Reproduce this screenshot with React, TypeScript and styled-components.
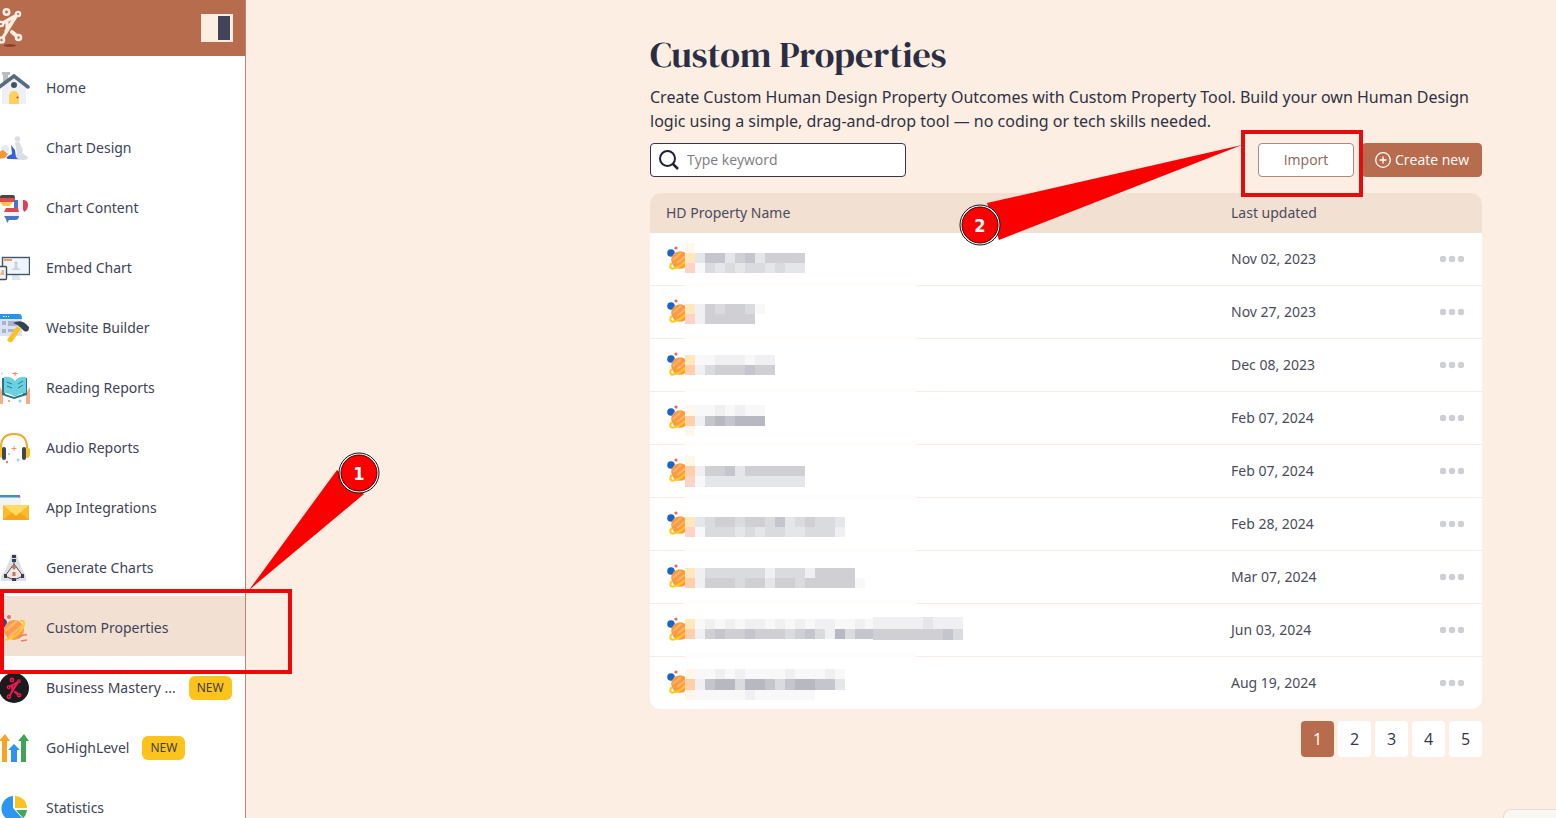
import React from 'react';
import styled, { createGlobalStyle } from 'styled-components';

const Global = createGlobalStyle`
  *, *::before, *::after { box-sizing: border-box; }
  body {
    margin: 0;
    background: #fceee3;
    color: #3f4254;
    font-family: "Noto Sans", "Open Sans", sans-serif;
    font-size: 14px;
    line-height: 20px;
  }
  button, input { font: inherit; font-family: "Open Sans", "Noto Sans", sans-serif; }
`;

const Shell = styled.div`
  display: flex;
  height: 100vh;
  overflow: hidden;
`;

const Sidebar = styled.aside`
  flex: 0 0 246px;
  height: 100vh;
  background: #fff;
  border-right: 1px solid #b98674;
`;

const Brand = styled.header`
  display: flex;
  align-items: center;
  justify-content: space-between;
  height: 56px;
  padding-right: 12px;
  background: #b86c4e;
`;

const CollapseButton = styled.button`
  display: flex;
  justify-content: flex-end;
  width: 32px;
  height: 28px;
  padding: 2px 3px;
  border: 0;
  background: #fdeee2;
  &::after {
    content: '';
    width: 12px;
    height: 24px;
    background: #404359;
  }
`;

const NavList = styled.ul`
  margin: 0;
  padding: 0;
  list-style: none;
`;

const NavItem = styled.li<{ $active?: boolean }>`
  position: relative;
  z-index: ${(p) => (p.$active ? 2 : 0)};
  background: ${(p) => (p.$active ? '#f2e0d3' : 'transparent')};
`;

const NavLink = styled.a`
  display: flex;
  align-items: center;
  height: 60px;
  padding: 4px 12px 0 0;
  color: #404359;
  text-decoration: none;
  white-space: nowrap;
`;

const NavIcon = styled.svg`
  flex: none;
  width: 30px;
  height: 32px;
  margin-right: 16px;
`;

const Badge = styled.span`
  margin-left: 13px;
  padding: 0 8px;
  border-radius: 6px;
  background: #fbc31c;
  color: #404040;
  font-size: 12px;
  line-height: 24px;
`;

const Callout = styled.svg<{ $left: number; $top: number }>`
  position: absolute;
  left: ${(p) => p.$left}px;
  top: ${(p) => p.$top}px;
  pointer-events: none;
  z-index: 3;
  text {
    fill: #fff;
    font: bold 18px "DejaVu Sans Condensed", "DejaVu Sans", sans-serif;
    text-anchor: middle;
  }
`;

const Main = styled.main`
  flex: 1;
  display: flex;
  justify-content: flex-end;
  padding: 31px 74px 0 24px;
`;

const Content = styled.div`
  width: 100%;
  max-width: 832px;
`;

const Title = styled.h1`
  margin: 0 0 6px;
  color: #2b2e42;
  font-family: "DM Serif Display", "Liberation Serif", serif;
  font-size: 36px;
  font-weight: 400;
  line-height: 48px;
`;

const Lead = styled.p`
  margin: 0 0 10px;
  color: #2f3142;
  font-size: 16px;
  line-height: 24px;
`;

const Toolbar = styled.div`
  display: flex;
  align-items: center;
  gap: 8px;
  margin-bottom: 16px;
`;

const SearchBox = styled.label`
  display: flex;
  align-items: center;
  width: 256px;
  height: 34px;
  margin-right: auto;
  padding: 0 8px;
  gap: 8px;
  border: 1px solid #33354a;
  border-radius: 4px;
  background: #fff;
  svg { flex: none; }
`;

const SearchInput = styled.input`
  flex: 1;
  min-width: 0;
  padding: 0;
  border: 0;
  outline: 0;
  background: transparent;
  color: #33354a;
  &::placeholder { color: #7b7c80; opacity: 1; }
`;

const ImportSlot = styled.div`
  position: relative;
  z-index: 2;
`;

const Button = styled.button<{ $primary?: boolean }>`
  display: flex;
  align-items: center;
  justify-content: center;
  gap: 4px;
  width: ${(p) => (p.$primary ? 120 : 96)}px;
  height: 34px;
  padding: 0;
  border: 1px solid ${(p) => (p.$primary ? '#b86c4e' : '#b08a7c')};
  border-radius: 4px;
  background: ${(p) => (p.$primary ? '#b86c4e' : '#fff')};
  color: ${(p) => (p.$primary ? '#fff' : '#8e6455')};
`;

const TableCard = styled.div`
  overflow: hidden;
  border-radius: 10px;
  background: #fff;
`;

const Table = styled.table`
  width: 100%;
  border-collapse: separate;
  border-spacing: 0;
  table-layout: fixed;
`;

const HeadCell = styled.th<{ $width?: number }>`
  width: ${(p) => (p.$width ? `${p.$width}px` : 'auto')};
  height: 40px;
  padding: 0 16px;
  background: #f2e0d3;
  color: #4a4c5c;
  font-weight: 400;
  text-align: left;
`;

const Cell = styled.td`
  height: 53px;
  padding: 0 16px;
  border-bottom: 1px solid #f5ece7;
  color: #4a4c5c;
  tr:last-child > & {
    height: 52px;
    border-bottom: 0;
  }
`;

const NameArt = styled.svg`
  display: block;
  overflow: visible;
`;

const MoreButton = styled.button`
  display: block;
  padding: 0;
  margin-left: auto;
  border: 0;
  background: none;
  line-height: 0;
`;

const Pager = styled.nav`
  display: flex;
  justify-content: flex-end;
  gap: 4px;
  margin-top: 12px;
`;

const PageButton = styled.button<{ $current?: boolean }>`
  width: 33px;
  height: 36px;
  padding: 0;
  border: 0;
  border-radius: 4px;
  background: ${(p) => (p.$current ? '#b86c4e' : '#fff')};
  color: ${(p) => (p.$current ? '#fff' : '#33354a')};
  font-size: 16px;
`;

const CornerWidget = styled.div`
  position: fixed;
  right: 0;
  bottom: 0;
  width: 53px;
  height: 9px;
  border: 1px solid #e6dcd4;
  border-width: 1px 0 0 1px;
  border-radius: 8px 0 0 0;
  background: #faf7f3;
`;

const Figure = ({ color, hole }: { color: string; hole: string }) => (
  <g stroke={color} fill={hole} strokeWidth="2.600" strokeLinecap="round" strokeLinejoin="round">
    <path d="M1 17 17 8 2 32M16 9 6 24M7 14v7" fill="none" strokeWidth="3.200" />
    <path d="M12 25l6 5" fill="none" strokeWidth="4" />
    <circle cx="6.500" cy="5" r="2.700" />
    <circle cx="18" cy="7" r="2.200" strokeWidth="2.200" />
    <circle cx="1" cy="17" r="2.200" strokeWidth="2.200" />
    <circle cx="1.500" cy="33" r="2.500" />
    <circle cx="18.500" cy="30.500" r="2.500" />
  </g>
);

const Planet = () => (
  <g>
    <circle cx="4" cy="10" r="3.800" fill="#1765c9" />
    <circle cx="9" cy="5" r="1.600" fill="#e2685e" />
    <circle cx="13" cy="17" r="8.800" fill="#fb9a3e" />
    <path d="M6 17 14 10M10 20 20 12" stroke="#ffb46a" strokeWidth="2" />
    <path d="M4.500 20q-3 6 2 5.500Q15 24 21 15" fill="none" stroke="#ffc91f" strokeWidth="2.200" />
  </g>
);

const icons: Record<string, React.ReactNode> = {
  home: (
    <>
      <path d="M2 0h8v3H8v7H3V3H2z" fill="#b7bec6" />
      <path d="M2 14 14 4l12 11v17H2z" fill="#eef0f5" />
      <path d="M-2 16 14 4l14 11" fill="none" stroke="#596b7e" strokeWidth="3.500" strokeLinecap="round" />
      <circle cx="14" cy="13" r="3" fill="#3e5266" />
      <path d="M9 32v-8a5 5 0 0 1 10 0v8z" fill="#ffd05b" />
      <circle cx="17.500" cy="25.500" r="1" fill="#7a6040" />
    </>
  ),
  design: (
    <>
      <circle cx="17.500" cy="7" r="2.800" fill="#dcdde1" />
      <path d="M15 11q3-2 5 0l3 7-1 3 6 4q0 3-4 3H14q-2-1 0-3l3-3z" fill="#dddee3" />
      <circle cx="5" cy="17" r="4" fill="#e5ecf6" />
      <path d="M11 13l4 5 1 7 2 2H8q-3-1 0-3l4-2z" fill="#3564d2" />
      <path d="M-1 20l4-2 5 4-3 4-6 1z" fill="#ef9b3d" />
    </>
  ),
  content: (
    <>
      <path d="M0 5q0-2 2-2h11q2 0 2 3H0z" fill="#4c4549" />
      <path d="M0 6h15v4H0z" fill="#e34c43" />
      <path d="M0 10h13l-3 4H3z" fill="#ffc453" />
      <path d="M14 8h4v8h-4z" fill="#4776c9" />
      <path d="M18 8h5v9h-5z" fill="#f1f1f4" />
      <path d="M23 8q5 0 5 5t-4 7l-1-3z" fill="#dc4058" />
      <path d="M6 16h12l1 4H4z" fill="#db4957" />
      <path d="M4 20h15v4H4z" fill="#f3f3f6" />
      <path d="M4 24h15q0 4-4 4H9l-2 3-1-4z" fill="#4777c6" />
    </>
  ),
  embed: (
    <>
      <path d="M12 23h7l2 5h-9z" fill="#dbe9f7" />
      <rect x="2.500" y="5.500" width="27" height="17" fill="#eff5fb" stroke="#40566e" strokeWidth="1.400" />
      <path d="M4 7h8v2H4z" fill="#f39869" />
      <circle cx="16" cy="11" r="1.500" fill="#c2ccd8" />
      <path d="M15 12h2l1 4 3 2H11l3-2z" fill="#cbd3dd" />
      <rect x="-3" y="14.500" width="9.500" height="13" rx="1" fill="#f4f4f4" stroke="#3d4c5e" strokeWidth="1.400" />
      <path d="M2 18h2v5H0z" fill="#e6b798" />
    </>
  ),
  website: (
    <>
      <path d="M0 7h22v17H0z" fill="#d9e2f5" />
      <path d="M0 2h19q3 0 3 5H0z" fill="#2394f0" />
      <path d="M3 4.500h6" stroke="#fff" strokeDasharray="1.500 1" />
      <path d="M2 9h4v4H2zM2 17h4v4H2zM8 9h9v5H8zM8 17h6v3H8z" fill="#a9b3cb" />
      <path d="M17 14l4 3-9 13q-3 1-5-2z" fill="#fbc21d" />
      <path d="M13 11q8-4 13 1l3 3q0 6-5 4l-4-4q-3-3-7-4z" fill="#344257" />
    </>
  ),
  reading: (
    <>
      <path d="M0 15q4 5 3 17H0zM30 15q-5 5-4 17h4z" fill="#f9ac88" />
      <path d="M2 6h3v16l9 3 9-3V6h4v17l-13 4L2 23z" fill="#2c7480" />
      <path d="M4 5q7-1 11 4v16Q10 21 4 21zM26 5q-7-1-11 4v16q5-4 11-4z" fill="#6bd0df" />
      <path d="M7 10l5 2M7 14l5 2M18 12l5-3M18 16l5-3" stroke="#277f91" />
      <path d="M15-1v5M12.500 1.500h5" stroke="#ef815d" />
      <circle cx="9" cy="29" r="1" fill="#ee8b70" />
      <circle cx="20" cy="29" r="1.500" fill="#8cd6ee" />
      <circle cx="2" cy="1.500" r="1" fill="#b7d8e4" />
    </>
  ),
  audio: (
    <>
      <path d="M1 20V14Q2 2 14 2t13 12v6" fill="none" stroke="#efa829" strokeWidth="2" />
      <path d="M-1 15q4-1 5 2v8l-5 1zM30 17q-5-4-7 1v7l5 1 2-2z" fill="#fcc21f" />
      <rect x="2" y="15" width="4" height="13" rx="2" fill="#404652" />
      <rect x="22" y="15" width="4" height="13" rx="2" fill="#404652" />
      <path d="M14 14v5M11.500 16.500h5" stroke="#ef985a" />
      <circle cx="9" cy="22" r="1" fill="#73caed" />
      <circle cx="18" cy="28" r="1.500" fill="#98d8f0" />
      <circle cx="7" cy="30" r="1.200" fill="#ee7966" />
    </>
  ),
  apps: (
    <>
      <path d="M0 4h21v14H0z" fill="#f3f3f6" />
      <path d="M0 3h20v2.500H0z" fill="#438fb7" />
      <circle cx="19" cy="4.200" r="1.300" fill="#a5756d" />
      <path d="M3 13h26v15H3z" fill="#fdbb2b" />
      <path d="M3 28 16 17l13 11z" fill="#f9a51b" />
      <path d="M3 13h26L16 24z" fill="#ffdb63" />
    </>
  ),
  generate: (
    <>
      <path d="M14 2q4 0 4 5l5 12 3 5v5H1v-5l4-5 5-12q0-5 4-5z" fill="#dedfe5" />
      <path d="M14 7v5l-9 12 9 4 9-4-9-12" fill="#f3e5e0" stroke="#4a5163" strokeWidth="1" />
      <path d="M12 3h4v3h-4zM12 7h4v3h-4zM4 22h3v4H4zM21 22h3v4h-3zM12 26h4v3h-4z" fill="#3a4051" />
      <path d="M14 12l2.500 3-2.500 3-2.500-3zM12.500 20h3v4h-3z" fill="#b77964" />
    </>
  ),
  properties: (
    <>
      <circle cx="2" cy="11" r="5" fill="#2f3f9b" />
      <circle cx="9" cy="5" r="2" fill="#ed6b62" />
      <circle cx="14" cy="18" r="10" fill="#fb9b48" />
      <path d="M5 19 17 9M9 25 23 13" stroke="#ffb56f" strokeWidth="2.500" />
      <path d="M20 9q5-1 4 4-5 12-19 15" fill="none" stroke="#ffca27" strokeWidth="2" />
      <path d="M18 26q5-4 9-3M21 29l6-1" fill="none" stroke="#f17b61" strokeWidth="1.500" />
    </>
  ),
  business: (
    <>
      <circle cx="14" cy="16" r="15" fill="#1b1b1d" />
      <g transform="translate(8 5) scale(.6)"><Figure color="#f0184f" hole="#1b1b1d" /></g>
    </>
  ),
  level: (
    <>
      <path d="M2 30V9h-3l6-7 5 7H7v21z" fill="#fba224" />
      <path d="M11 30V18H8l6-6 6 6h-3v12z" fill="#2c94ee" />
      <path d="M21 30V9h-3l6-7 5 7h-3v21z" fill="#42a452" />
    </>
  ),
  stats: (
    <>
      <path d="M13 4v12l9 10A12.500 12.500 0 1 1 13 4z" fill="#2c97f0" />
      <path d="M15 4a12 12 0 0 1 12 12H15z" fill="#fcc41d" />
      <path d="M16 18h11q-1 6-4 8z" fill="#42a757" />
    </>
  ),
};

const navItems = [
  { icon: 'home', label: 'Home' },
  { icon: 'design', label: 'Chart Design' },
  { icon: 'content', label: 'Chart Content' },
  { icon: 'embed', label: 'Embed Chart' },
  { icon: 'website', label: 'Website Builder' },
  { icon: 'reading', label: 'Reading Reports' },
  { icon: 'audio', label: 'Audio Reports' },
  { icon: 'apps', label: 'App Integrations' },
  { icon: 'generate', label: 'Generate Charts' },
  { icon: 'properties', label: 'Custom Properties', active: true },
  { icon: 'business', label: 'Business Mastery ...', isNew: true },
  { icon: 'level', label: 'GoHighLevel', isNew: true },
  { icon: 'stats', label: 'Statistics' },
];

/* Shades used by the pixelated property names. */
const shades: Record<string, string> = {
  a: '#f8f8f9', b: '#f0f0f2', c: '#e5e6e9', d: '#dadbdf', e: '#cfcfd4',
  f: '#c5c6cd', g: '#b7b8c0', y: '#ffe8bd', o: '#fdd0ab', p: '#fcd3c6', l: '#fff7ea',
};

type Patch = [x: number, y: number, cells: string, height?: number];

const rows: { date: string; mosaic: Patch[] }[] = [
  { date: 'Nov 02, 2023', mosaic: [[19, 10, 'l'], [19, 20, 'ycffcefceeee'], [19, 30, 'padcdcddcdcc']] },
  { date: 'Nov 27, 2023', mosaic: [[19, 18, 'ybedeeda'], [19, 28, 'pbeeeee']] },
  { date: 'Dec 08, 2023', mosaic: [[19, 16, 'yaabbbabb'], [19, 26, 'obdeeefee']] },
  { date: 'Feb 07, 2024', mosaic: [[19, 13, 'laababaa', 11], [19, 24, 'obfgfggg'], [19, 34, 'l']] },
  { date: 'Feb 07, 2024', mosaic: [[19, 11, 'l'], [19, 21, 'obeefceeeeee'], [19, 31, 'pacccccccccc', 11]] },
  { date: 'Feb 28, 2024', mosaic: [[19, 19, 'ycdeedeedfcdeddc'], [19, 29, 'padddcdcddccdddb']] },
  { date: 'Mar 07, 2024', mosaic: [[19, 17, 'ybddddddbdddbeeee'], [19, 27, 'obeeedeeceedeeeeea']] },
  {
    date: 'Jun 03, 2024',
    mosaic: [
      [19, 15, 'yabababbabababbaaba'],
      [19, 25, 'obefeefeeedefdbgdff'],
      [207, 13, 'bbbbbcbbb', 12],
      [207, 25, 'eeeeeeefd', 11],
    ],
  },
  { date: 'Aug 19, 2024', mosaic: [[19, 12, 'laababaaaabaaaba'], [19, 22, 'obfggdggfdfggffc', 11], [19, 33, 'laaaaabaaaaaa']] },
];

const PropertyName = ({ mosaic, last }: { mosaic: Patch[]; last: boolean }) => (
  <NameArt width="300" height="52" viewBox="0 0 300 52" role="img" aria-label="Hidden property name">
    {!last && <rect x="19" y="49" width="231" height="5" fill="#fffdfb" />}
    <svg y="8" width="19" height="36" overflow="hidden">
      <g transform="translate(1 2)"><Planet /></g>
    </svg>
    {mosaic.map(([x, y, cells, height = 10]) =>
      cells.split('').map((c, i) => (
        <rect key={`${x}-${y}-${i}`} x={x + i * 10} y={y} width="10" height={height} fill={shades[c]} shapeRendering="crispEdges" />
      )),
    )}
  </NameArt>
);

const Marker = ({ x, y, n }: { x: number; y: number; n: number }) => (
  <g>
    <circle cx={x} cy={y} r="20" fill="#fff" stroke="#111" />
    <circle cx={x} cy={y} r="18" fill="#fb0000" stroke="#400" />
    <text x={x} y={y + 7}>{n}</text>
  </g>
);

export default function App() {
  return (
    <>
      <Global />
      <Shell>
        <Sidebar>
          <Brand>
            <svg width="30" height="42" viewBox="0 0 30 42" aria-label="Logo">
              <ellipse cx="10" cy="38.500" rx="6" ry="1.500" fill="#8e3e26" />
              <Figure color="#fdeee2" hole="#b86c4e" />
            </svg>
            <CollapseButton aria-label="Collapse sidebar" />
          </Brand>
          <nav aria-label="Main">
            <NavList>
              {navItems.map((item) => (
                <NavItem key={item.label} $active={item.active}>
                  <NavLink href="#">
                    <NavIcon viewBox="0 0 30 32" aria-hidden="true">{icons[item.icon]}</NavIcon>
                    {item.label}
                    {item.isNew && <Badge>NEW</Badge>}
                  </NavLink>
                  {item.active && (
                    <Callout $left={0} $top={-144} width="382" height="222">
                      <path d="M337 18 364 42 249 138z" fill="#fb0000" />
                      <rect x="2" y="139" width="288" height="81" fill="none" stroke="#ee0808" strokeWidth="4" />
                      <Marker x={359} y={21} n={1} />
                    </Callout>
                  )}
                </NavItem>
              ))}
            </NavList>
          </nav>
        </Sidebar>
        <Main>
          <Content>
            <Title>Custom Properties</Title>
            <Lead>
              Create Custom Human Design Property Outcomes with Custom Property Tool. Build your own Human Design
              logic using a simple, drag-and-drop tool — no coding or tech skills needed.
            </Lead>
            <Toolbar>
              <SearchBox>
                <svg width="20" height="20" viewBox="0 0 20 20" fill="none" stroke="#1f2133" strokeWidth="2" aria-hidden="true">
                  <circle cx="8.500" cy="8.500" r="7.500" />
                  <path d="M13.500 13.500 19 19" strokeWidth="2.500" />
                </svg>
                <SearchInput type="text" placeholder="Type keyword" aria-label="Type keyword" />
              </SearchBox>
              <ImportSlot>
                <Button type="button">Import</Button>
                <Callout $left={-300} $top={-13} width="406" height="118">
                  <path d="M29 73 41 110 284 15z" fill="#fb0000" />
                  <rect x="285" y="2" width="118" height="63" fill="none" stroke="#e40c0c" strokeWidth="4" />
                  <Marker x={22} y={95} n={2} />
                </Callout>
              </ImportSlot>
              <Button type="button" $primary>
                <svg width="16" height="16" viewBox="0 0 16 16" fill="none" stroke="#fff" strokeWidth="1.300" aria-hidden="true">
                  <circle cx="8" cy="8" r="7.300" />
                  <path d="M8 4.500v7M4.500 8h7" />
                </svg>
                Create new
              </Button>
            </Toolbar>
            <TableCard>
              <Table>
                <thead>
                  <tr>
                    <HeadCell scope="col">HD Property Name</HeadCell>
                    <HeadCell scope="col" $width={200}>Last updated</HeadCell>
                    <HeadCell $width={67} aria-label="Actions" />
                  </tr>
                </thead>
                <tbody>
                  {rows.map((row, i) => (
                    <tr key={i}>
                      <Cell><PropertyName mosaic={row.mosaic} last={i === rows.length - 1} /></Cell>
                      <Cell>{row.date}</Cell>
                      <Cell>
                        <MoreButton type="button" aria-label="More actions">
                          <svg width="27" height="8" viewBox="0 0 27 8" fill="#cecfd6">
                            <circle cx="4" cy="4" r="3.200" />
                            <circle cx="13" cy="4" r="3.200" />
                            <circle cx="22" cy="4" r="3.200" />
                          </svg>
                        </MoreButton>
                      </Cell>
                    </tr>
                  ))}
                </tbody>
              </Table>
            </TableCard>
            <Pager aria-label="Pages">
              {[1, 2, 3, 4, 5].map((n) => (
                <PageButton key={n} type="button" $current={n === 1}>{n}</PageButton>
              ))}
            </Pager>
          </Content>
        </Main>
        <CornerWidget />
      </Shell>
    </>
  );
}
